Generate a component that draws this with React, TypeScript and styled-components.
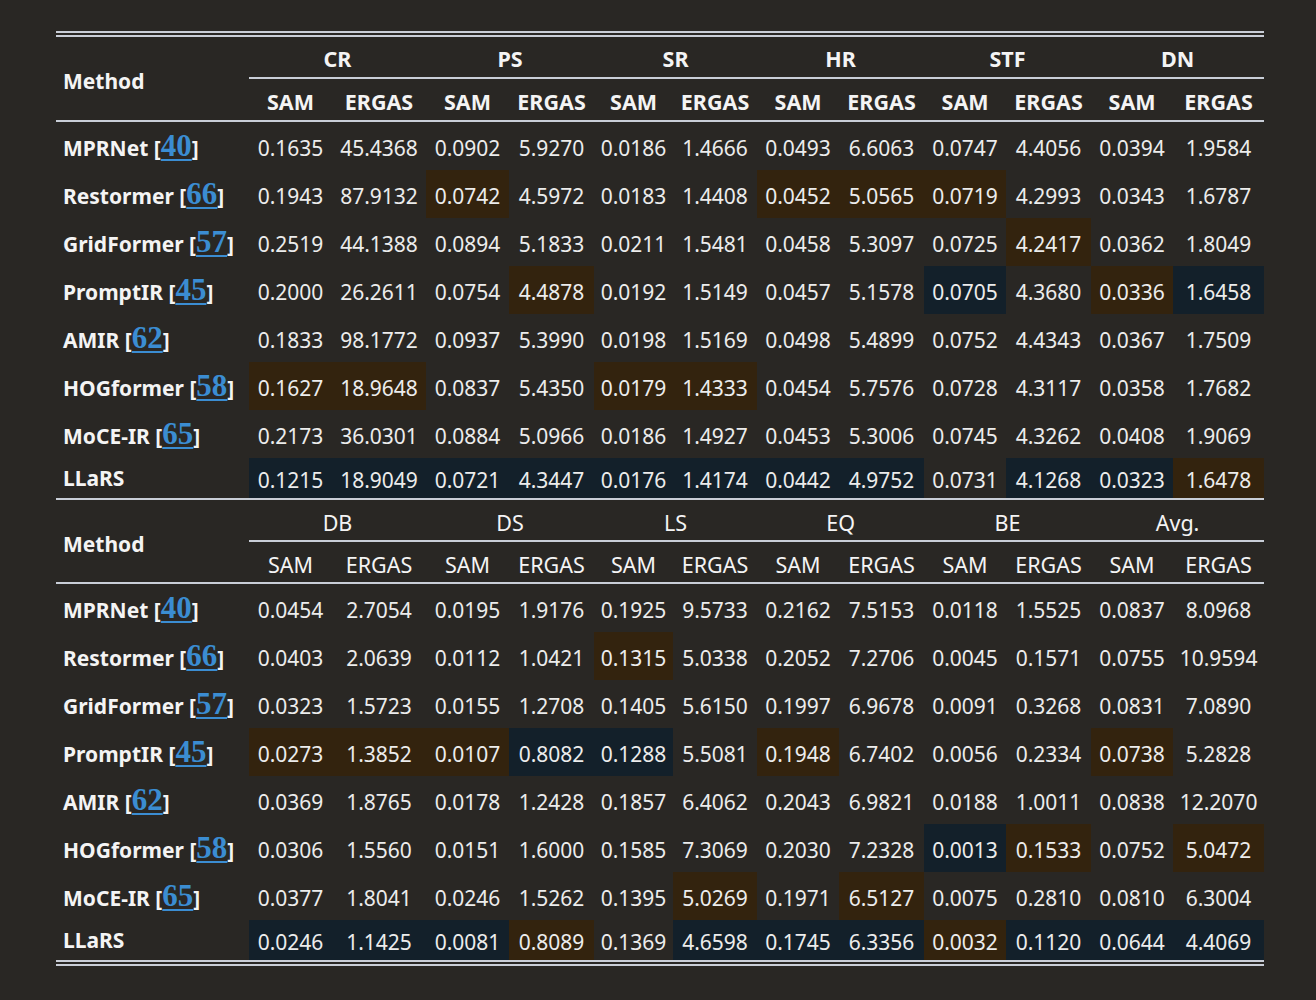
import React from 'react'
import styled, { createGlobalStyle } from 'styled-components'

type Mark = '.' | 'o' | 'b'

interface Row {
  name: string
  cite?: string
  values: string[]
  marks: string
}

interface Block {
  groups: string[]
  bold: boolean
  rows: Row[]
}

const widths = [193, 83, 94, 83, 85, 79, 84, 82, 85, 82, 85, 82, 91]

const row = (name: string, cite: string | undefined, vals: string, marks: string): Row => ({
  name,
  cite,
  values: vals.split(' '),
  marks,
})

const blocks: Block[] = [
  {
    groups: ['CR', 'PS', 'SR', 'HR', 'STF', 'DN'],
    bold: true,
    rows: [
      row('MPRNet', '40', '0.1635 45.4368 0.0902 5.9270 0.0186 1.4666 0.0493 6.6063 0.0747 4.4056 0.0394 1.9584', '............'),
      row('Restormer', '66', '0.1943 87.9132 0.0742 4.5972 0.0183 1.4408 0.0452 5.0565 0.0719 4.2993 0.0343 1.6787', '..o...ooo...'),
      row('GridFormer', '57', '0.2519 44.1388 0.0894 5.1833 0.0211 1.5481 0.0458 5.3097 0.0725 4.2417 0.0362 1.8049', '.........o..'),
      row('PromptIR', '45', '0.2000 26.2611 0.0754 4.4878 0.0192 1.5149 0.0457 5.1578 0.0705 4.3680 0.0336 1.6458', '...o....b.ob'),
      row('AMIR', '62', '0.1833 98.1772 0.0937 5.3990 0.0198 1.5169 0.0498 5.4899 0.0752 4.4343 0.0367 1.7509', '............'),
      row('HOGformer', '58', '0.1627 18.9648 0.0837 5.4350 0.0179 1.4333 0.0454 5.7576 0.0728 4.3117 0.0358 1.7682', 'oo..oo......'),
      row('MoCE-IR', '65', '0.2173 36.0301 0.0884 5.0966 0.0186 1.4927 0.0453 5.3006 0.0745 4.3262 0.0408 1.9069', '............'),
      row('LLaRS', undefined, '0.1215 18.9049 0.0721 4.3447 0.0176 1.4174 0.0442 4.9752 0.0731 4.1268 0.0323 1.6478', 'bbbbbbbb.bbo'),
    ],
  },
  {
    groups: ['DB', 'DS', 'LS', 'EQ', 'BE', 'Avg.'],
    bold: false,
    rows: [
      row('MPRNet', '40', '0.0454 2.7054 0.0195 1.9176 0.1925 9.5733 0.2162 7.5153 0.0118 1.5525 0.0837 8.0968', '............'),
      row('Restormer', '66', '0.0403 2.0639 0.0112 1.0421 0.1315 5.0338 0.2052 7.2706 0.0045 0.1571 0.0755 10.9594', '....o.......'),
      row('GridFormer', '57', '0.0323 1.5723 0.0155 1.2708 0.1405 5.6150 0.1997 6.9678 0.0091 0.3268 0.0831 7.0890', '............'),
      row('PromptIR', '45', '0.0273 1.3852 0.0107 0.8082 0.1288 5.5081 0.1948 6.7402 0.0056 0.2334 0.0738 5.2828', 'ooobb.o...o.'),
      row('AMIR', '62', '0.0369 1.8765 0.0178 1.2428 0.1857 6.4062 0.2043 6.9821 0.0188 1.0011 0.0838 12.2070', '............'),
      row('HOGformer', '58', '0.0306 1.5560 0.0151 1.6000 0.1585 7.3069 0.2030 7.2328 0.0013 0.1533 0.0752 5.0472', '........bo.o'),
      row('MoCE-IR', '65', '0.0377 1.8041 0.0246 1.5262 0.1395 5.0269 0.1971 6.5127 0.0075 0.2810 0.0810 6.3004', '.....o.o....'),
      row('LLaRS', undefined, '0.0246 1.1425 0.0081 0.8089 0.1369 4.6598 0.1745 6.3356 0.0032 0.1120 0.0644 4.4069', 'bbbo.bbbobbb'),
    ],
  },
]

const GlobalStyle = createGlobalStyle`
  html, body {
    margin: 0;
    background: #292724;
  }
  body {
    font-family: "Noto Sans", "Open Sans", sans-serif;
    color: #ececec;
  }
`

const Page = styled.div`
  padding: 31px 0 0 56px;
`

const Table = styled.table`
  width: 1208px;
  table-layout: fixed;
  border-collapse: separate;
  border-spacing: 0;
  border-top: 6px double #c9ced7;
  border-bottom: 6px double #c9ced7;
  font-size: 21px;
`

const Col = styled.col<{ $w: number }>`
  width: ${(p) => p.$w}px;
`

const rule = '2px solid #c9ced7'

const MethodHead = styled.th<{ $top?: boolean }>`
  text-align: left;
  padding: 5px 0 0 7px;
  font-size: 21px;
  font-weight: 700;
  color: #f4f4f4;
  border-bottom: ${rule};
  border-top: ${(p) => (p.$top ? rule : 'none')};
`

const GroupHead = styled.th<{ $bold: boolean; $top?: boolean }>`
  height: ${(p) => (p.$top ? 44 : 42)}px;
  padding: ${(p) => (p.$top ? 4 : 3)}px 0 0;
  box-sizing: border-box;
  font-size: 21.5px;
  font-weight: ${(p) => (p.$bold ? 700 : 400)};
  color: #f4f4f4;
  border-bottom: ${rule};
  border-top: ${(p) => (p.$top ? rule : 'none')};
`

const SubHead = styled.th<{ $bold: boolean; $h: number }>`
  height: ${(p) => p.$h}px;
  padding: 4px 0 0;
  box-sizing: border-box;
  font-size: 21.5px;
  font-weight: ${(p) => (p.$bold ? 700 : 400)};
  color: #f4f4f4;
  border-bottom: ${rule};
`

const DataRow = styled.tr<{ $last: boolean }>`
  height: ${(p) => (p.$last ? 40 : 48)}px;
`

const NameCell = styled.th`
  text-align: left;
  padding: 0 0 0 7px;
  font-weight: 700;
  color: #f4f4f4;
  white-space: nowrap;
`

const Cite = styled.a`
  font-family: "Liberation Serif", "Times New Roman", serif;
  font-size: 31px;
  font-weight: 700;
  line-height: 1;
  color: #3b8dd2;
  text-decoration: underline;
  text-decoration-thickness: 1.5px;
  text-underline-offset: 3px;
`

const markColor: Record<Mark, string> = {
  '.': 'transparent',
  o: '#33230e',
  b: '#13202a',
}

const Value = styled.td<{ $mark: Mark }>`
  text-align: center;
  padding: 3px 0 0;
  background: ${(p) => markColor[p.$mark]};
`

function TableBlock({ block, first }: { block: Block; first: boolean }) {
  const subHeight = first ? 43 : 42
  return (
    <tbody>
      <tr>
        <MethodHead rowSpan={2} $top={!first}>
          Method
        </MethodHead>
        {block.groups.map((g) => (
          <GroupHead key={g} colSpan={2} $bold={block.bold} $top={!first}>
            {g}
          </GroupHead>
        ))}
      </tr>
      <tr>
        {block.groups.map((g) => (
          <React.Fragment key={g}>
            <SubHead $bold={block.bold} $h={subHeight}>SAM</SubHead>
            <SubHead $bold={block.bold} $h={subHeight}>ERGAS</SubHead>
          </React.Fragment>
        ))}
      </tr>
      {block.rows.map((r, i) => (
        <DataRow key={r.name} $last={i === block.rows.length - 1}>
          <NameCell>
            {r.name}
            {r.cite && (
              <>
                {' ['}
                <Cite href={`#bib${r.cite}`}>{r.cite}</Cite>]
              </>
            )}
          </NameCell>
          {r.values.map((v, j) => (
            <Value key={j} $mark={r.marks[j] as Mark}>
              {v}
            </Value>
          ))}
        </DataRow>
      ))}
    </tbody>
  )
}

export default function App() {
  return (
    <Page>
      <GlobalStyle />
      <Table>
        <colgroup>
          {widths.map((w, i) => (
            <Col key={i} $w={w} />
          ))}
        </colgroup>
        {blocks.map((b, i) => (
          <TableBlock key={i} block={b} first={i === 0} />
        ))}
      </Table>
    </Page>
  )
}
